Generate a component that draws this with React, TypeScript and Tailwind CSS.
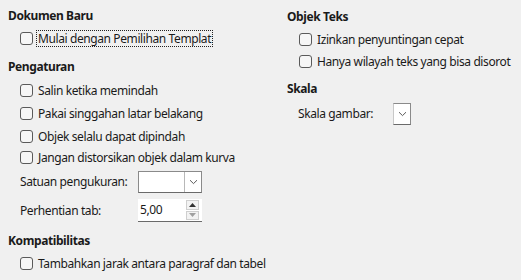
const font = { fontFamily: '"Noto Sans", "Open Sans", sans-serif' };

function Check({ label, focused }: { label: string; focused?: boolean }) {
  return (
    <div className="flex items-center h-full whitespace-nowrap">
      <span className="w-[13px] h-[13px] rounded-[3px] border border-[#5a5a5a] bg-[#f6f6f6] shrink-0" />
      <span
        className={`ml-[3px] px-[1px] leading-[15px] ${
          focused ? 'border border-dotted border-[#222]' : 'border border-transparent'
        }`}
      >
        {label}
      </span>
    </div>
  );
}

function Chevron() {
  return (
    <svg width="9" height="6" viewBox="0 0 9 6" fill="none">
      <path d="M1 1.2 L4.5 4.6 L8 1.2" stroke="#5a5a5a" strokeWidth="1" />
    </svg>
  );
}

function Combo({ wide }: { wide?: boolean }) {
  return (
    <div
      className={`flex h-full bg-white border border-[#8a8a8a] border-b-[#6a6a6a] ${
        wide ? 'w-[64px]' : 'w-[18px] border-l-[#c8c8c8]'
      }`}
    >
      {wide && <div className="flex-1" />}
      <div className={`w-[17px] flex items-center justify-center ${wide ? 'border-l border-[#b8b8b8]' : ''}`}>
        <Chevron />
      </div>
    </div>
  );
}

function Spin() {
  return (
    <div className="flex w-[64px] h-full bg-white border-b border-[#6a6a6a]">
      <div className="flex-1 flex items-center pl-[2px]">5,00</div>
      <div className="w-[13px] mr-[3px] flex flex-col gap-[1px] pt-[1px] pb-[1px]">
        <div className="flex-1 flex items-center justify-center bg-[#f3f3f3] border border-[#cfcfcf]">
          <svg width="7" height="4" viewBox="0 0 7 4">
            <path d="M0 4 L3.5 0 L7 4 Z" fill="#333" />
          </svg>
        </div>
        <div className="flex-1 flex items-center justify-center bg-[#f3f3f3] border border-[#cfcfcf]">
          <svg width="7" height="4" viewBox="0 0 7 4">
            <path d="M0 0 L3.5 4 L7 0 Z" fill="#a0a0a0" />
          </svg>
        </div>
      </div>
    </div>
  );
}

function Heading({ children, className = '' }: { children: string; className?: string }) {
  return <div className={`h-[22px] flex items-center font-bold ${className}`}>{children}</div>;
}

export default function App() {
  return (
    <div
      className="w-[521px] h-[280px] bg-[#f0f0f0] text-[12px] tracking-[-0.4px] text-[#1a1a1a] flex overflow-hidden"
      style={font}
    >
      {/* left column */}
      <div className="w-[279px] pl-[8px] pt-[5px] flex flex-col">
        <Heading>Dokumen Baru</Heading>
        <div className="h-[22px] pl-[12px]">
          <Check label="Mulai dengan Pemilihan Templat" focused />
        </div>

        <Heading className="mt-[7px]">Pengaturan</Heading>
        <div className="h-[24px] pl-[12px]">
          <Check label="Salin ketika memindah" />
        </div>
        <div className="h-[23px] pl-[12px]">
          <Check label="Pakai singgahan latar belakang" />
        </div>
        <div className="h-[22px] pl-[12px]">
          <Check label="Objek selalu dapat dipindah" />
        </div>
        <div className="h-[21px] pl-[12px]">
          <Check label="Jangan distorsikan objek dalam kurva" />
        </div>

        <div className="h-[22px] mt-[3px] pl-[12px] flex items-center">
          <span className="w-[118px]">Satuan pengukuran:</span>
          <Combo wide />
        </div>
        <div className="h-[23px] mt-[6px] pl-[12px] flex items-center">
          <span className="w-[118px]">Perhentian tab:</span>
          <Spin />
        </div>

        <Heading className="mt-[8px]">Kompatibilitas</Heading>
        <div className="h-[22px] pl-[12px]">
          <Check label="Tambahkan jarak antara paragraf dan tabel" />
        </div>
      </div>

      {/* right column */}
      <div className="flex-1 pl-[8px] pt-[6px] flex flex-col">
        <Heading>Objek Teks</Heading>
        <div className="h-[22px] pl-[12px]">
          <Check label="Izinkan penyuntingan cepat" />
        </div>
        <div className="h-[23px] pl-[12px]">
          <Check label="Hanya wilayah teks yang bisa disorot" />
        </div>

        <Heading className="mt-[5px]">Skala</Heading>
        <div className="h-[22px] mt-[3px] pl-[11px] flex items-center">
          <span className="w-[95px]">Skala gambar:</span>
          <Combo />
        </div>
      </div>
    </div>
  );
}
